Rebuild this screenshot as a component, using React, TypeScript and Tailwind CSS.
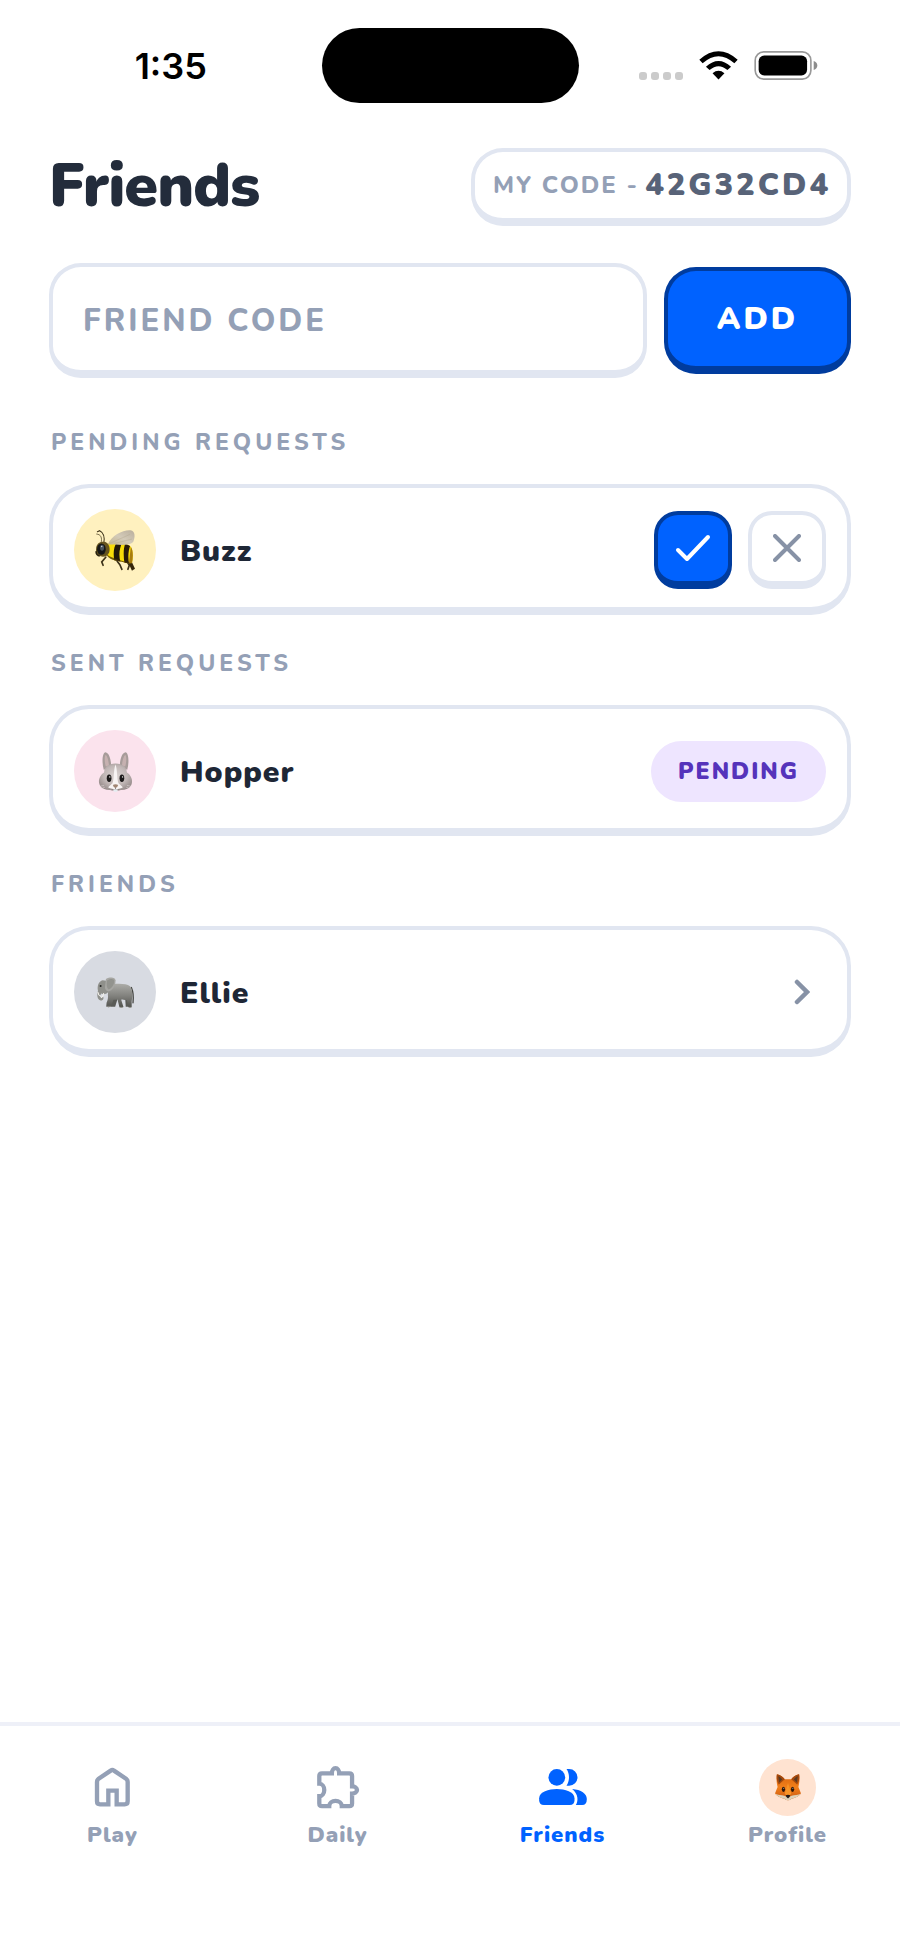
import type { ReactNode } from "react";

const shell = "border-4 border-b-8 border-[#e1e6f1] bg-white";

function BeeIcon() {
  return (
    <svg viewBox="0 0 122 128" className="h-[43px] w-[41px]" aria-hidden="true">
      <defs>
        <linearGradient id="wing" x1="0" y1="1" x2="1" y2="0">
          <stop offset="0" stopColor="#c4b68f" />
          <stop offset="0.5" stopColor="#d3cab8" />
          <stop offset="1" stopColor="#b9ae9c" />
        </linearGradient>
        <clipPath id="beeBody">
          <path d="M30 48C44 36 88 38 106 52C114 62 114 84 110 102C96 104 84 98 72 96C52 94 34 84 32 70Z" />
        </clipPath>
      </defs>
      <g fill="none" stroke="#3d3218" strokeWidth="5" strokeLinecap="round">
        <path d="M26 44C30 24 24 10 14 5L7 8" strokeWidth="3" />
        <path d="M18 42C22 26 18 16 5 15" strokeWidth="2" />
        <path d="M32 84L20 98L24 108M66 96L74 106L80 120M96 98L102 108L98 120" />
      </g>
      <path d="M104 86L119 118L110 124L98 98Z" fill="#35250c" />
      <g clipPath="url(#beeBody)">
        <path d="M24 34H118V108H24Z" fill="#f8dc09" />
        <path d="M66 38C54 54 54 76 58 98L76 100C70 78 72 58 82 38Z" fill="#211808" />
        <path d="M92 38C84 56 84 78 88 104L102 106C97 84 99 64 106 46Z" fill="#2a1c08" />
        <path d="M107 50L101 102H116V56Z" fill="#a87c10" />
        <path d="M34 80C54 96 84 98 108 106" fill="none" stroke="#493108" strokeWidth="8" opacity="0.75" />
      </g>
      <path d="M38 46C50 18 84 2 106 4C120 6 120 24 114 38C104 52 68 46 38 46Z" fill="url(#wing)" />
      <path d="M44 43L104 16M58 43L110 30" stroke="#a99d82" strokeWidth="1.5" opacity="0.6" />
      <path d="M3 60C3 42 18 35 31 39C42 44 46 58 42 70C36 88 8 86 3 68Z" fill="#66541e" />
      <ellipse cx="19" cy="60" rx="13" ry="17" fill="#161716" />
      <ellipse cx="21" cy="56" rx="6" ry="9" fill="#48525b" />
      <circle cx="20" cy="52" r="2" fill="#d4dce4" />
      <path d="M4 66C2 74 8 80 14 80" stroke="#2a230f" strokeWidth="5" fill="none" />
    </svg>
  );
}

function RabbitIcon() {
  return (
    <svg viewBox="0 0 104 122" className="h-[41px] w-[35px]" aria-hidden="true">
      <defs>
        <radialGradient id="rabbitFur" cx="0.5" cy="0.45" r="0.6">
          <stop offset="0" stopColor="#dcd5d4" />
          <stop offset="0.6" stopColor="#c0b6b5" />
          <stop offset="1" stopColor="#958a89" />
        </radialGradient>
      </defs>
      <path d="M17 56C10 30 14 4 22 4C34 6 38 26 40 48ZM87 56C94 30 90 4 82 4C70 6 66 26 64 48Z" fill="#a79c9a" />
      <path d="M23 46C18 28 20 12 23 12C29 16 32 34 33 45ZM81 46C86 28 84 12 81 12C75 16 72 34 71 45Z" fill="#c6b1b0" />
      <path d="M52 37C74 37 85 48 86 64C98 72 104 86 100 98C96 113 80 117 52 117S8 113 4 98C0 86 6 72 18 64C19 48 30 37 52 37Z" fill="url(#rabbitFur)" />
      <path d="M52 40C46 54 49 80 43 96L30 108C38 115 66 115 74 108L61 96C55 80 58 54 52 40Z" fill="#f8f4f4" />
      <ellipse cx="33" cy="81" rx="7" ry="11" fill="#1b1919" />
      <ellipse cx="71" cy="81" rx="7" ry="11" fill="#1b1919" />
      <circle cx="35" cy="77" r="2" fill="#fff" />
      <circle cx="73" cy="77" r="2" fill="#fff" />
      <path d="M44 101Q52 97 60 101Q58 109 52 110Q46 109 44 101Z" fill="#a18674" />
      <path d="M52 109V115M40 116Q48 117 52 113Q56 117 64 116" fill="none" stroke="#766a69" strokeWidth="2" />
      <path d="M46 114H58V120Q52 123 46 120Z" fill="#e5edf1" />
      <path d="M18 103L4 105M20 108L9 112M86 103L100 105M84 108L95 112" stroke="#efeaea" strokeWidth="1.5" />
    </svg>
  );
}

function ElephantIcon() {
  return (
    <svg viewBox="0 0 118 98" className="h-[33px] w-[39px]" aria-hidden="true">
      <defs>
        <linearGradient id="hide" x1="0" y1="0" x2="0" y2="1">
          <stop offset="0" stopColor="#acaca8" />
          <stop offset="0.5" stopColor="#82827e" />
          <stop offset="1" stopColor="#4e4f4b" />
        </linearGradient>
      </defs>
      <path d="M107 34C113 48 114 62 112 80" fill="none" stroke="#454642" strokeWidth="4" strokeLinecap="round" />
      <path d="M50 62L44 92H58L66 66ZM88 62L90 92H100L106 58Z" fill="#5a5b57" />
      <path d="M38 26C58 22 90 20 103 30C111 38 111 58 108 76V93Q103 97 98 93L93 72C86 71 80 71 76 70L83 93Q77 97 71 94L65 70C60 71 56 71 53 71L45 92Q37 95 31 91L32 80C36 73 37 63 36 56Z" fill="url(#hide)" />
      <path d="M20 12C8 16 3 28 6 44C2 58 4 71 14 73C22 74 25 66 21 61L17 65C12 65 12 57 16 52C26 58 42 51 40 34L36 14Z" fill="#8f908b" />
      <path d="M30 8C42 2 58 2 59 12C60 28 50 43 39 45C32 46 27 40 27 32Z" fill="#a6a6a2" />
      <path d="M34 12C45 6 55 7 55 14C55 27 46 37 38 40C32 35 31 24 34 12Z" fill="#92938e" />
      <circle cx="14" cy="29" r="3" fill="#20211f" />
      <path d="M6 49Q7 58 14 60M23 52Q22 59 17 64" fill="none" stroke="#f4f2ec" strokeWidth="3.5" strokeLinecap="round" />
      <path d="M33 91H45M72 94H82M98 94H108" stroke="#aaa9a1" strokeWidth="2" />
    </svg>
  );
}

function FoxIcon() {
  return (
    <svg viewBox="0 0 86 84" className="h-7 w-7" aria-hidden="true">
      <defs>
        <linearGradient id="foxFur" x1="0" y1="0" x2="0" y2="1">
          <stop offset="0" stopColor="#d9660f" />
          <stop offset="0.5" stopColor="#f17f1a" />
          <stop offset="1" stopColor="#c85710" />
        </linearGradient>
      </defs>
      <path d="M9 3C20 5 29 12 33 18H53C57 12 66 5 77 3C80 18 77 32 75 42L83 62C74 74 60 76 54 78Q43 88 32 78C26 76 12 74 3 62L11 42C9 32 6 18 9 3Z" fill="url(#foxFur)" />
      <path d="M9 3C20 5 29 12 33 18L15 34C9 26 7 14 9 3ZM77 3C66 5 57 12 53 18L71 34C77 26 79 14 77 3Z" fill="#a4490e" />
      <path d="M13 9C19 11 23 15 25 19L16 28ZM73 9C67 11 63 15 61 19L70 28Z" fill="#5b3a22" />
      <path d="M3 62C12 68 22 66 32 69L43 74L54 69C64 66 74 68 83 62C74 74 60 76 54 78Q43 88 32 78C26 76 12 74 3 62Z" fill="#ddd2b8" />
      <path d="M43 30L33 62Q38 70 43 70T53 62Z" fill="#f79427" />
      <ellipse cx="29" cy="49" rx="5" ry="8" fill="#2b1609" />
      <ellipse cx="57" cy="49" rx="5" ry="8" fill="#2b1609" />
      <circle cx="30" cy="46" r="1.5" fill="#fff" />
      <circle cx="58" cy="46" r="1.5" fill="#fff" />
      <path d="M36 67Q43 64 50 67Q48 75 43 77Q38 75 36 67Z" fill="#211a18" />
    </svg>
  );
}

function HomeIcon() {
  return (
    <svg viewBox="0 0 117 126" className="h-[42px] w-[39px]" fill="none" stroke="currentColor" strokeWidth="13" aria-hidden="true">
      <path d="M12 48Q12 42 17 38L53 14Q58 10 63 14L99 38Q104 42 104 48V106Q104 115 95 115H71V74H46V115H21Q12 115 12 106Z" />
    </svg>
  );
}

function PuzzleIcon() {
  return (
    <svg viewBox="0 0 139 138" className="h-[46px] w-[46px]" fill="none" stroke="currentColor" strokeWidth="13" aria-hidden="true">
      <path d="M21 28H51A11 16 0 0 1 73 28H104Q112 28 112 36V67A15 11 0 0 1 112 89V119Q112 127 104 127H81A19 16 0 0 0 43 127H21Q13 127 13 119V97A15 19 0 0 0 13 59V36Q13 28 21 28Z" />
    </svg>
  );
}

function PeopleIcon() {
  return (
    <svg viewBox="0 0 155 120" className="h-10 w-[52px]" fill="currentColor" aria-hidden="true">
      <circle cx="59" cy="31" r="25" />
      <path d="M6 94C6 74 35 66 59 66S112 74 112 94V100Q112 114 98 114H20Q6 114 6 100Z" />
      <path d="M88 6H96A25 25 0 0 1 96 56H88C98 42 98 20 88 6Z" />
      <path d="M105 66C132 68 149 80 149 96Q149 114 135 114H116C124 102 124 82 105 66Z" />
    </svg>
  );
}

function SectionTitle({ children }: { children: ReactNode }) {
  return (
    <h2 className="mb-[26px] pl-0.5 text-[23px] leading-[30px] font-extrabold tracking-[4px] text-[#94a0b6] uppercase">
      {children}
    </h2>
  );
}

type RowProps = { name: string; tint: string; avatar: ReactNode; children: ReactNode };

function PersonRow({ name, tint, avatar, children }: RowProps) {
  return (
    <div className={`${shell} flex items-center rounded-[40px] px-[21px] pt-[21px] pb-4`}>
      <div className={`${tint} flex size-[82px] shrink-0 items-center justify-center rounded-full`}>{avatar}</div>
      <span className="ml-6 flex-1 pt-1 text-[30px] leading-10 font-black tracking-[1px] text-[#1e2736]">{name}</span>
      {children}
    </div>
  );
}

type TabProps = { label: string; active?: boolean; children: ReactNode };

function Tab({ label, active = false, children }: TabProps) {
  return (
    <a
      href={`#${label.toLowerCase()}`}
      aria-current={active ? "page" : undefined}
      className={`${active ? "text-[#0062ff]" : "text-[#94a0b6]"} flex flex-col items-center gap-1`}
    >
      <span className="flex h-[58px] items-center justify-center">{children}</span>
      <span className="text-[22px] leading-[30px] font-black tracking-[1px]">{label}</span>
    </a>
  );
}

export default function App() {
  return (
    <div className="flex min-h-screen flex-col bg-white font-['Nunito','Open_Sans',sans-serif]">
      <div className="grid grid-cols-[1fr_auto_1fr] items-center pt-7">
        <span className="pl-5 text-center font-['Inter',sans-serif] text-[36px] leading-10 font-semibold text-black">1:35</span>
        <div className="h-[75px] w-[257px] rounded-full bg-black" />
        <div className="flex items-center justify-center gap-4 pr-[22px]">
          <div className="flex gap-1 pt-5">
            <span className="size-2 rounded-[3px] bg-[#cbcbcb]" />
            <span className="size-2 rounded-[3px] bg-[#cbcbcb]" />
            <span className="size-2 rounded-[3px] bg-[#cbcbcb]" />
            <span className="size-2 rounded-[3px] bg-[#cbcbcb]" />
          </div>
          <svg viewBox="0 0 118 87" className="h-[29px] w-[39px]" aria-label="Wi-Fi">
            <path d="M1 26Q59 -25 117 26L107 37Q59 -6 11 37Z" />
            <path d="M21 47Q59 13 97 47L86 57Q59 34 32 57Z" />
            <path d="M41 67Q59 52 77 67L59 86Z" />
          </svg>
          <svg viewBox="0 0 192 88" className="h-[29px] w-16" aria-label="Battery full">
            <rect x="2.5" y="2.5" width="169" height="83" rx="26" fill="none" stroke="#999" strokeWidth="5" />
            <rect x="13" y="14" width="147" height="60" rx="17" />
            <path d="M180 30Q191 34 191 44T180 58Z" fill="#8c8c8c" />
          </svg>
        </div>
      </div>

      <main className="flex-1 px-[49px] pt-[45px]">
        <header className="flex h-[78px] items-center justify-between">
          <h1 className="pb-0.5 text-[61px] leading-[72px] font-black tracking-[-1px] text-[#232c3b]">Friends</h1>
          <div className={`${shell} flex h-[78px] items-center gap-1.5 rounded-[32px] pr-4 pl-[18px] whitespace-nowrap`}>
            <span className="text-[24px] font-extrabold tracking-[2px] text-[#94a0b6]">MY CODE -</span>
            <span className="text-[31px] font-black tracking-[3px] text-[#586378]">42G32CD4</span>
          </div>
        </header>

        <form className="mt-[37px] flex items-center gap-[17px]" onSubmit={(e) => e.preventDefault()}>
          <input
            type="text"
            aria-label="Friend code"
            placeholder="FRIEND CODE"
            className={`${shell} h-[115px] min-w-0 flex-1 rounded-[32px] px-[30px] pt-1 text-[31px] font-extrabold tracking-[3px] text-[#232c3b] outline-none placeholder:text-[#94a0b6] placeholder:opacity-100`}
          />
          <button
            type="submit"
            className="h-[107px] w-[187px] rounded-[32px] border-4 border-b-8 border-[#003c9e] bg-[#0062ff] pt-0.5 text-[31px] font-black tracking-[3px] text-white"
          >
            ADD
          </button>
        </form>

        <div className="mt-[50px] flex flex-col gap-[34px]">
          <section>
            <SectionTitle>Pending requests</SectionTitle>
            <PersonRow name="Buzz" tint="bg-[#fff1bf]" avatar={<BeeIcon />}>
              <div className="flex gap-4">
                <button
                  type="button"
                  aria-label="Accept Buzz"
                  className="flex size-[78px] items-center justify-center rounded-3xl border-4 border-b-8 border-[#003c9e] bg-[#0062ff]"
                >
                  <svg viewBox="0 0 36 28" className="h-7 w-9" fill="none" stroke="white" strokeWidth="4" strokeLinecap="round" strokeLinejoin="round">
                    <path d="M3 16L12 25L33 3" />
                  </svg>
                </button>
                <button type="button" aria-label="Decline Buzz" className={`${shell} flex size-[78px] items-center justify-center rounded-3xl`}>
                  <svg viewBox="0 0 28 28" className="size-7" fill="none" stroke="#8792a6" strokeWidth="4" strokeLinecap="round">
                    <path d="M2 2L26 26M26 2L2 26" />
                  </svg>
                </button>
              </div>
            </PersonRow>
          </section>

          <section>
            <SectionTitle>Sent requests</SectionTitle>
            <PersonRow name="Hopper" tint="bg-[#fbe3ed]" avatar={<RabbitIcon />}>
              <span className="flex h-[61px] items-center rounded-full bg-[#eee5ff] px-[27px] pt-0.5 text-[23px] font-black tracking-[2px] text-[#5533bb]">
                PENDING
              </span>
            </PersonRow>
          </section>

          <section>
            <SectionTitle>Friends</SectionTitle>
            <PersonRow name="Ellie" tint="bg-[#d8dbe2]" avatar={<ElephantIcon />}>
              <a href="#ellie" aria-label="Open Ellie" className="flex w-[49px] justify-center">
                <svg viewBox="0 0 16 26" className="h-[26px] w-4" fill="none" stroke="#8792a6" strokeWidth="4.5" strokeLinecap="round" strokeLinejoin="miter">
                  <path d="M3 3L13 13L3 23" />
                </svg>
              </a>
            </PersonRow>
          </section>
        </div>
      </main>

      <nav className="grid grid-cols-4 border-t-4 border-[#eef0f8] pt-8 pb-[105px]">
        <Tab label="Play">
          <HomeIcon />
        </Tab>
        <Tab label="Daily">
          <PuzzleIcon />
        </Tab>
        <Tab label="Friends" active>
          <PeopleIcon />
        </Tab>
        <Tab label="Profile">
          <span className="flex size-[57px] items-center justify-center rounded-full bg-[#ffe3d1]">
            <FoxIcon />
          </span>
        </Tab>
      </nav>
    </div>
  );
}
